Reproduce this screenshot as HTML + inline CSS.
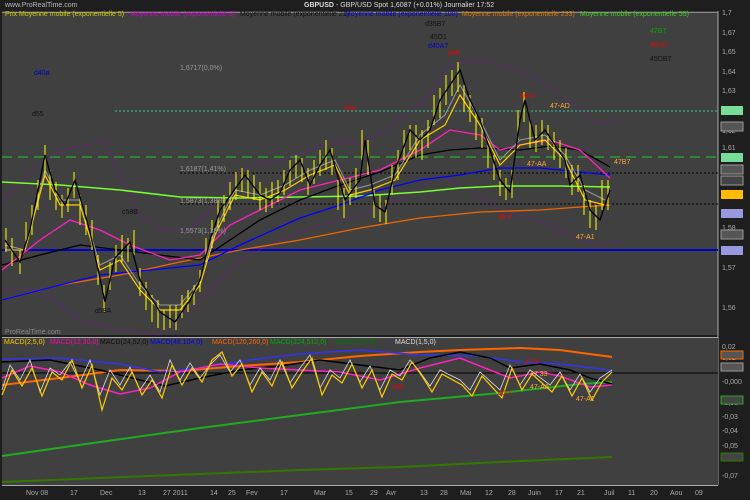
<!DOCTYPE html>
<html><head><meta charset="utf-8"><style>
body{margin:0;width:750px;height:500px;overflow:hidden;background:#1e1e1e;font-family:"Liberation Sans",sans-serif}
svg{display:block}
text{font-family:"Liberation Sans",sans-serif;font-size:7px}
</style></head><body>
<svg width="750" height="500" viewBox="0 0 750 500">
<rect width="750" height="500" fill="#1e1e1e"/>
<text x="5" y="7" fill="#bbb">www.ProRealTime.com</text>
<text x="304" y="7" fill="#ddd" font-weight="bold">GBPUSD</text>
<text x="336" y="7" fill="#ddd">- GBP/USD Spot    1,6087 (+0.01%)    Journalier 17:52</text>
<rect x="2" y="11" width="716" height="324" fill="#404040"/>
<line x1="718" y1="11" x2="718" y2="485" stroke="#aaa"/>
<line x1="2" y1="12.5" x2="718" y2="12.5" stroke="#888"/>
<text x="5" y="16" fill="#cc0" font-size="5">Prix  Moyenne mobile (exponentielle 5)</text>
<text x="130" y="16" fill="#c0c" font-size="5">Moyenne mobile (exponentielle 8)</text>
<text x="240" y="16" fill="#111" font-size="5">Moyenne mobile (exponentielle 21)</text>
<text x="345" y="16" fill="#00c" font-size="5">Moyenne mobile (exponentielle 100)</text>
<text x="462" y="16" fill="#d70" font-size="5">Moyenne mobile (exponentielle 233)</text>
<text x="580" y="16" fill="#4c2" font-size="5">Moyenne mobile (exponentielle 55)</text>
<line x1="115" y1="111" x2="718" y2="111" stroke="#3c9" stroke-dasharray="2,2"/>
<line x1="2" y1="157" x2="718" y2="157" stroke="#2c2" stroke-dasharray="10,6"/>
<line x1="180" y1="173" x2="718" y2="173" stroke="#000" stroke-dasharray="2,2"/>
<line x1="180" y1="204" x2="718" y2="204" stroke="#000" stroke-dasharray="2,2"/>
<line x1="2" y1="250" x2="718" y2="250" stroke="#00c" stroke-width="2"/>
<polyline fill="none" stroke="#90c" stroke-dasharray="1,2" points="2,200 30,175 60,150 90,145 105,140 120,175 140,215 160,230 190,230 210,210 230,180 250,165 280,160 310,150 340,140 360,145 400,120 430,95 450,65 480,60 500,65 520,70 540,80 560,95 580,110 600,125 620,120"/>
<polyline fill="none" stroke="#90c" stroke-dasharray="1,2" points="2,290 40,290 80,320 120,330 160,335 200,300 240,260 280,240 320,225 360,215 400,200 440,175 470,190 500,210 520,215 550,225 580,240 600,245 620,240"/>
<polyline fill="none" stroke="#7f3" stroke-width="1.5" points="2,182 60,185 120,190 180,197 240,198 300,197 360,196 420,192 460,188 500,186 560,186 610,187"/>
<polyline fill="none" stroke="#e60" stroke-width="1.3" points="2,300 60,285 120,275 180,262 240,250 300,240 360,228 420,218 480,212 540,210 580,207 610,205"/>
<polyline fill="none" stroke="#00f" stroke-width="1.3" points="2,300 60,285 100,275 150,270 200,265 240,245 300,218 340,205 380,190 420,180 460,175 500,168 540,168 580,172 610,175"/>
<polyline fill="none" stroke="#000" stroke-width="1.3" points="2,265 40,255 80,245 120,250 160,255 200,260 230,240 260,220 300,200 340,185 380,172 420,155 450,150 480,148 520,150 550,146 580,150 610,167"/>
<polyline fill="none" stroke="#f2b" stroke-width="1.3" points="2,270 40,240 70,220 100,230 130,245 170,260 200,255 230,225 260,210 300,190 340,180 380,170 420,150 450,130 480,135 500,150 520,145 550,140 580,150 610,178"/>
<polyline fill="none" stroke="#999" stroke-width="1" points="5,245 25,250 45,170 60,200 80,200 100,265 120,255 140,285 160,305 180,305 200,280 215,230 235,190 260,195 285,185 310,170 335,160 350,190 370,185 395,175 420,135 445,115 460,85 480,120 500,160 520,140 545,135 565,155 585,190 605,200"/>
<polyline fill="none" stroke="#fc0" stroke-width="1.2" points="5,250 25,250 45,175 60,205 80,205 100,270 120,260 140,290 160,310 180,310 200,285 215,235 235,195 260,200 285,190 310,175 335,165 350,195 370,190 395,180 420,140 445,125 460,95 480,125 500,165 520,145 545,140 565,160 585,200 605,205"/>
<g stroke="#ff0" stroke-width="1">
<path d="M6,228V252M12,238V266M20,250V274M26,222V244M32,205V235M38,180V210M45,145V175M50,170V200M56,182V210M62,195V218M68,188V212M74,172V198M80,195V225M86,205V235M92,220V250M98,255V285M104,285V312M110,262V290M116,245V272M122,235V262M128,238V262M134,230V255M140,268V296M146,282V310M152,295V322M158,300V328M164,310V330M170,305V328M176,305V330M182,295V318M188,290V312M194,285V305M200,270V292M206,238V262M212,220V248M218,200V230M224,195V222M230,182V210M236,172V200M242,168V192M248,170V198M254,175V200M260,182V210M266,188V212M272,182V208M278,180V202M284,170V195M290,160V186M296,155V178M302,158V182M308,168V195M314,160V184M320,150V176M326,140V170M332,148V175M338,180V210M344,188V218M350,178V205M356,168V198M362,130V160M368,140V175M374,190V218M380,195V222M386,200V224M392,165V195M398,150V180M404,130V160M410,125V150M416,125V158M422,130V160M428,120V148M434,95V125M440,88V118M446,75V105M452,70V96M458,62V92M464,85V112M470,95V122M476,112V140M482,118V148M488,140V168M494,155V180M500,170V196M506,178V200M512,170V198M518,110V140M524,92V122M530,118V148M536,125V152M542,120V145M548,125V150M554,132V160M560,140V168M566,148V178M572,165V195M578,165V192M584,185V215M590,200V228M596,205V230M602,180V210M608,180V210"/>
</g>
<polyline fill="none" stroke="#000" stroke-width="1.3" points="5,240 20,262 30,230 45,155 55,190 65,205 75,180 90,232 105,302 115,258 130,242 140,280 160,312 175,322 190,300 200,280 210,240 220,210 245,175 260,195 270,200 280,193 290,170 300,160 310,185 320,165 330,150 345,200 360,180 365,140 375,205 385,212 395,170 410,130 420,140 430,130 440,100 450,85 460,70 470,100 480,120 490,150 500,180 510,192 520,120 525,100 535,140 545,130 555,145 565,160 570,185 580,175 590,210 600,220 610,190"/>
<text x="34" y="75" fill="#00c">d40a</text>
<text x="32" y="116" fill="#111">d55</text>
<text x="122" y="214" fill="#111">c58B</text>
<text x="180" y="70" fill="#999" font-size="6">1,6717(0,0%)</text>
<text x="180" y="171" fill="#999" font-size="6">1,6187(1,41%)</text>
<text x="180" y="203" fill="#999" font-size="6">1,5873(1,38%)</text>
<text x="180" y="233" fill="#999" font-size="6">1,5573(1,39%)</text>
<text x="344" y="110" fill="#e00">d4a</text>
<text x="95" y="313" fill="#111">d58A</text>
<text x="425" y="26" fill="#111">d35B7</text>
<text x="430" y="39" fill="#111">45D1</text>
<text x="428" y="48" fill="#00c">d40A7</text>
<text x="448" y="55" fill="#e00">d46</text>
<text x="520" y="98" fill="#e00">46-D</text>
<text x="550" y="108" fill="#fa3">47-AD</text>
<text x="527" y="166" fill="#fa3">47-AA</text>
<text x="614" y="164" fill="#fa3">47B7</text>
<text x="498" y="219" fill="#e00">d6 4</text>
<text x="576" y="239" fill="#fa3">47-A1</text>
<text x="650" y="33" fill="#0a0">47B7</text>
<text x="650" y="47" fill="#e00">46-07</text>
<text x="650" y="61" fill="#111">45DB7</text>
<text x="5" y="334" fill="#888" font-size="6">ProRealTime.com</text>
<g fill="#aaa" font-size="6">
<text x="722" y="15">1,7</text><text x="722" y="35">1,67</text><text x="722" y="54">1,65</text><text x="722" y="74">1,64</text><text x="722" y="93">1,63</text><text x="722" y="133">1,62</text><text x="722" y="150">1,61</text><text x="722" y="230">1,58</text><text x="722" y="270">1,57</text><text x="722" y="310">1,56</text>
</g>
<rect x="721" y="106" width="22" height="9" fill="#7d9"/>
<rect x="721" y="122" width="22" height="9" fill="#555" stroke="#999"/>
<rect x="721" y="153" width="22" height="9" fill="#7d9"/>
<rect x="721" y="165" width="22" height="9" fill="#555" stroke="#999"/>
<rect x="721" y="176" width="22" height="9" fill="#444" stroke="#999"/>
<rect x="721" y="190" width="22" height="9" fill="#fb0"/>
<rect x="721" y="209" width="22" height="9" fill="#99d"/>
<rect x="721" y="230" width="22" height="9" fill="#555" stroke="#999"/>
<rect x="721" y="246" width="22" height="9" fill="#99d"/>
<rect x="2" y="337" width="716" height="148" fill="#404040"/>
<line x1="2" y1="337.5" x2="718" y2="337.5" stroke="#aaa"/>
<text x="4" y="344" fill="#fc0" font-size="5">MACD(2,5,0)</text>
<text x="50" y="344" fill="#f0a" font-size="5">MACD(12,30,0)</text>
<text x="100" y="344" fill="#111" font-size="5">MACD(24,52,0)</text>
<text x="150" y="344" fill="#00f" font-size="5">MACD(48,104,0)</text>
<text x="212" y="344" fill="#f60" font-size="5">MACD(120,260,0)</text>
<text x="270" y="344" fill="#0a0" font-size="5">MACD(224,512,0)</text>
<text x="335" y="344" fill="#070" font-size="5">MACD(0,0,0)</text>
<text x="395" y="344" fill="#ddd" font-size="5">MACD(1,5,0)</text>
<line x1="2" y1="373" x2="718" y2="373" stroke="#000"/>
<polyline fill="none" stroke="#2a2" stroke-width="2" points="2,456 100,442 200,428 300,415 400,402 500,393 580,384 612,382"/>
<polyline fill="none" stroke="#370" stroke-width="2" points="2,482 100,478 200,474 300,470 400,467 500,462 612,457"/>
<polyline fill="none" stroke="#f60" stroke-width="2" points="2,385 60,378 120,370 180,371 240,366 300,362 360,356 420,352 460,350 520,348 560,350 612,357"/>
<polyline fill="none" stroke="#33e" stroke-width="1.5" points="2,359 60,358 120,364 160,372 200,368 250,360 300,354 360,350 420,355 480,356 520,362 560,364 600,369 612,371"/>
<polyline fill="none" stroke="#000" stroke-width="1.5" points="2,362 50,360 100,370 140,380 165,386 200,378 240,370 280,366 320,360 360,365 400,370 430,358 460,352 490,358 510,368 540,364 570,370 590,378 612,384"/>
<polyline fill="none" stroke="#f2b" stroke-width="1.5" points="2,378 30,366 60,372 90,385 120,394 150,388 180,372 220,364 260,368 300,370 340,372 380,380 420,368 460,358 490,370 510,378 540,372 560,376 590,387 612,385"/>
<polyline fill="none" stroke="#ddd" stroke-width="0.8" points="2,390 10,365 20,380 30,360 40,392 50,368 60,375 70,362 80,382 90,360 100,395 110,370 120,385 130,367 140,390 150,375 160,392 170,360 180,380 190,363 200,378 210,365 220,355 230,372 240,360 250,385 260,368 270,380 280,360 290,383 300,368 310,355 320,388 330,370 340,378 350,360 360,382 370,366 380,390 390,370 400,376 410,360 420,372 430,386 440,370 460,380 470,390 480,372 500,390 510,365 520,385 530,370 550,385 560,372 570,390 580,374 590,392 600,378 612,370"/>
<polyline fill="none" stroke="#fc0" stroke-width="1.2" points="2,395 12,370 22,386 32,368 42,396 52,372 62,380 72,360 82,388 92,365 102,410 112,378 122,390 132,372 142,395 152,380 162,398 172,365 182,385 192,368 202,382 212,360 222,352 232,376 242,364 252,392 262,372 272,386 282,362 292,388 302,372 312,358 322,395 332,375 342,383 352,364 362,388 372,370 382,397 392,374 402,380 412,362 422,376 432,392 442,374 462,385 472,396 482,376 502,398 512,368 522,390 532,374 552,392 562,376 572,396 582,378 592,400 602,382 612,372"/>
<text x="392" y="389" fill="#e00">x60</text>
<text x="498" y="395" fill="#e00">d6 1</text>
<text x="525" y="364" fill="#e00">47-8</text>
<text x="530" y="376" fill="#fa3">47 33</text>
<text x="530" y="389" fill="#fa3">47-AA</text>
<text x="576" y="401" fill="#fa3">47-A1</text>
<g fill="#aaa" font-size="6">
<text x="722" y="349">0,02</text><text x="722" y="360">0,01</text><text x="722" y="384">-0,000</text><text x="722" y="405">-0,03</text><text x="722" y="419">-0,03</text><text x="722" y="433">-0,04</text><text x="722" y="448">-0,05</text><text x="722" y="478">-0,07</text>
</g>
<rect x="721" y="363" width="22" height="8" fill="#555" stroke="#999"/>
<rect x="721" y="351" width="22" height="8" fill="#555" stroke="#f60"/>
<rect x="721" y="396" width="22" height="8" fill="#444" stroke="#2a2"/>
<rect x="721" y="453" width="22" height="8" fill="#444" stroke="#370"/>
<line x1="2" y1="485.5" x2="718" y2="485.5" stroke="#aaa"/>
<g fill="#aaa" font-size="6">
<text x="26" y="495">Nov 08</text><text x="70" y="495">17</text><text x="100" y="495">Dec</text><text x="138" y="495">13</text><text x="163" y="495">27 2011</text><text x="210" y="495">14</text><text x="228" y="495">25</text><text x="246" y="495">Fev</text><text x="280" y="495">17</text><text x="314" y="495">Mar</text><text x="345" y="495">15</text><text x="370" y="495">29</text><text x="386" y="495">Avr</text><text x="420" y="495">13</text><text x="440" y="495">28</text><text x="460" y="495">Mai</text><text x="485" y="495">12</text><text x="508" y="495">28</text><text x="528" y="495">Juin</text><text x="555" y="495">17</text><text x="577" y="495">21</text><text x="604" y="495">Juil</text><text x="628" y="495">11</text><text x="650" y="495">20</text><text x="670" y="495">Aou</text><text x="695" y="495">09</text>
</g>
</svg>
</body></html>
